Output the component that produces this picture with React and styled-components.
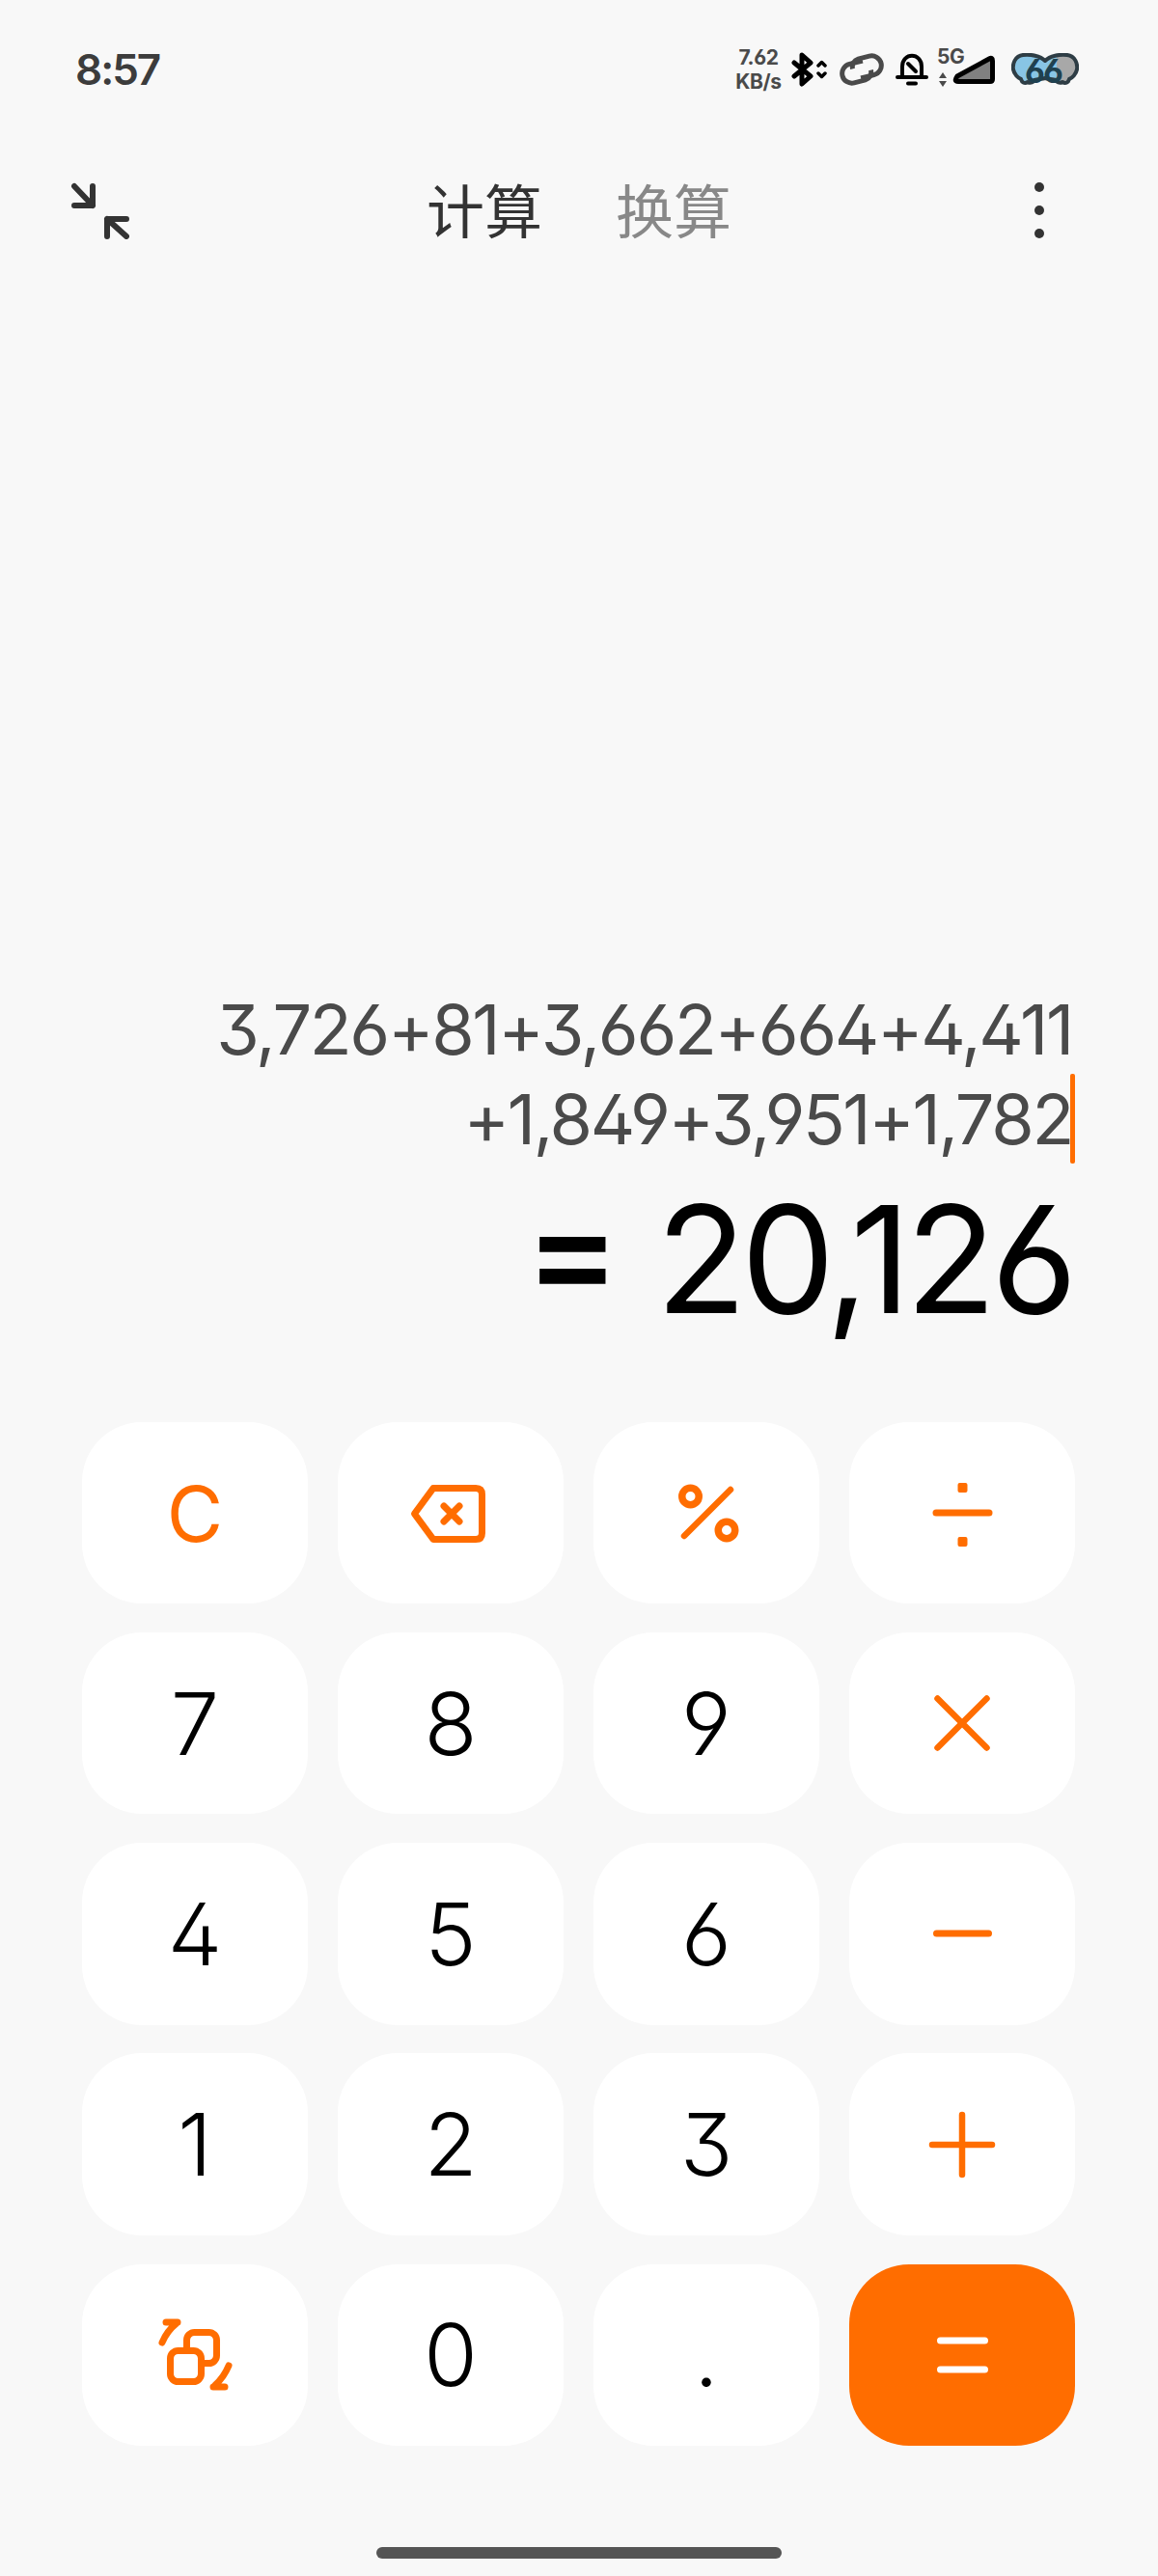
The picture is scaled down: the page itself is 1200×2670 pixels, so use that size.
import React from 'react'
import styled, { createGlobalStyle } from 'styled-components'

const ORANGE = '#ff6d00'

const GlobalStyle = createGlobalStyle`
  html, body { margin: 0; padding: 0; background: #f8f8f8; }
  body { font-family: "Inter", "Noto Sans CJK SC", sans-serif; font-feature-settings: "ss01"; }
`

const Page = styled.div`
  width: 1200px;
  height: 2670px;
  background: #f8f8f8;
  display: flex;
  flex-direction: column;
  overflow: hidden;
`

const StatusBar = styled.div`
  height: 146px;
  flex: none;
  box-sizing: border-box;
  padding: 0 82px 2px 78px;
  display: flex;
  align-items: center;
  justify-content: space-between;
`

const Time = styled.div`
  font-size: 44px;
  font-weight: 600;
  letter-spacing: -2px;
  color: #3c3c3c;
`

const StatusIcons = styled.div`
  display: flex;
  align-items: center;
`

const NetSpeed = styled.div`
  width: 50px;
  margin-right: 9px;
  text-align: center;
  font-size: 21px;
  font-weight: 700;
  line-height: 25px;
  letter-spacing: -0.4px;
  color: #4a4a4a;
`

const StatusIcon = styled.svg`
  display: block;
  flex: none;
  margin-left: ${p => p.$gap || 0}px;
`

const SignalBox = styled.div`
  position: relative;
  width: 60px;
  height: 44px;
  margin-left: 9px;
`

const FiveG = styled.span`
  position: absolute;
  left: 0;
  top: -1px;
  font-size: 21px;
  font-weight: 700;
  line-height: 20px;
  letter-spacing: -0.5px;
  color: #4a4a4a;
`

const BatteryBox = styled.div`
  position: relative;
  width: 70px;
  height: 34px;
  margin-left: 17px;
`

const BatteryText = styled.span`
  position: absolute;
  left: 0;
  right: 4px;
  top: 1px;
  text-align: center;
  font-size: 34px;
  font-weight: 700;
  line-height: 36px;
  letter-spacing: -2px;
  color: #1f4150;
`

const TopBar = styled.div`
  height: 144px;
  flex: none;
  box-sizing: border-box;
  padding: 0 116px 0 74px;
  display: flex;
  align-items: center;
  justify-content: space-between;
`

const Tabs = styled.div`
  display: flex;
  gap: 76px;
  margin: -4px 4px 0 0;
`

const Tab = styled.div`
  font-family: "Noto Sans CJK SC", sans-serif;
  font-size: 60px;
  line-height: 70px;
  font-weight: 400;
  color: ${p => (p.$active ? '#333333' : '#888888')};
`

const Dots = styled.div`
  width: 14px;
  display: flex;
  flex-direction: column;
  align-items: center;
  gap: 14px;
`

const Dot = styled.span`
  width: 10px;
  height: 10px;
  border-radius: 50%;
  background: #333;
`

const Display = styled.div`
  flex: 1;
  box-sizing: border-box;
  padding: 0 89px 76px 0;
  display: flex;
  flex-direction: column;
  justify-content: flex-end;
  align-items: flex-end;
`

const Expression = styled.div`
  font-size: 72px;
  line-height: 93px;
  font-weight: 400;
  letter-spacing: -2.35px;
  color: #4a4a4a;
  white-space: nowrap;
`

const Caret = styled.span`
  display: inline-block;
  width: 5px;
  height: 93px;
  margin-left: -2px;
  margin-right: -3px;
  vertical-align: top;
  border-radius: 2px;
  background: ${ORANGE};
`

const Result = styled.div`
  margin-top: 6px;
  font-size: 154px;
  line-height: 186px;
  font-weight: 400;
  letter-spacing: -5.5px;
  color: #000;
  white-space: nowrap;
`

const Equals = styled.span`
  margin-right: 43px;
  font-size: 145px;
  font-weight: 600;
  vertical-align: 13px;
  line-height: 1;
`

const Keypad = styled.div`
  flex: none;
  display: grid;
  grid-template-columns: repeat(4, 234px);
  grid-auto-rows: 188.5px;
  column-gap: 31px;
  row-gap: 29.7px;
  padding-left: 85px;
`

const Key = styled.div`
  border-radius: 62px;
  background: ${p => (p.$primary ? ORANGE : '#ffffff')};
  color: ${p => (p.$accent ? ORANGE : '#000000')};
  font-size: ${p => (p.$accent ? 80 : 90)}px;
  font-weight: ${p => (p.$accent ? 400 : 350)};
  display: flex;
  align-items: center;
  justify-content: center;
`

const Footer = styled.div`
  height: 135px;
  flex: none;
  display: flex;
  justify-content: center;
  padding-top: 105px;
  box-sizing: border-box;
`

const HomeBar = styled.div`
  width: 420px;
  height: 12px;
  border-radius: 6px;
  background: #555555;
`

const KeyIcon = ({ children, size = 90, fill = 'none', color = ORANGE, sw = 6.5 }) => (
  <svg width={size} height={size} viewBox={`0 0 ${size} ${size}`} fill={fill} stroke={color} strokeWidth={sw} strokeLinecap="round" strokeLinejoin="round">
    {children}
  </svg>
)

const keys = [
  { label: 'C', accent: true },
  { icon: 'back' },
  { icon: 'percent' },
  { icon: 'divide' },
  { label: '7' }, { label: '8' }, { label: '9' },
  { icon: 'times' },
  { label: '4' }, { label: '5' }, { label: '6' },
  { icon: 'minus' },
  { label: '1' }, { label: '2' }, { label: '3' },
  { icon: 'plus' },
  { icon: 'convert' },
  { label: '0' },
  { label: '.' },
  { icon: 'equals', primary: true },
]

const icons = {
  back: (
    <KeyIcon sw={7}>
      <path d="M27 19.5 H71 Q77.5 19.5 77.5 26 V66 Q77.5 72.5 71 72.5 H27 L7.5 46 Z" />
      <path d="M38 38 L54 54 M54 38 L38 54" />
    </KeyIcon>
  ),
  percent: (
    <KeyIcon>
      <circle cx="28.5" cy="28" r="8.75" strokeWidth={7.5} />
      <circle cx="66" cy="63" r="8.75" strokeWidth={7.5} />
      <path d="M70 21 L22 69" />
    </KeyIcon>
  ),
  divide: (
    <KeyIcon>
      <path d="M18 45 H73" strokeWidth={7} />
      <rect x="42.5" y="16" width="6" height="6" strokeWidth={4} fill={ORANGE} />
      <rect x="42.5" y="72" width="6" height="6" strokeWidth={4} fill={ORANGE} />
    </KeyIcon>
  ),
  times: (
    <KeyIcon>
      <path d="M19.5 19.5 L70.5 70.5 M70.5 19.5 L19.5 70.5" />
    </KeyIcon>
  ),
  minus: (
    <KeyIcon>
      <path d="M18.5 45 H72.5" strokeWidth={7} />
    </KeyIcon>
  ),
  plus: (
    <KeyIcon>
      <path d="M14 45 H76 M45 14 V76" strokeWidth={6.5} />
    </KeyIcon>
  ),
  convert: (
    <KeyIcon sw={7}>
      <rect x="36.5" y="21.5" width="31" height="32" rx="8" />
      <rect x="19.5" y="40.5" width="32" height="32" rx="8" fill="#fff" />
      <path d="M11 32 Q16 20 26 12 M15 11 H27" />
      <path d="M80 56 Q75 68 66 76 M64 78 H76" />
    </KeyIcon>
  ),
  equals: (
    <KeyIcon color="#ffffff" sw={7}>
      <path d="M22.5 30 H68.5 M22.5 60 H68.5" />
    </KeyIcon>
  ),
}

const Bluetooth = () => (
  <StatusIcon width="37" height="36" viewBox="0 0 37 36">
    <path d="M3 11 L20 25 L11 33 V3 L20 11 L3 25" fill="none" stroke="#000" strokeWidth="5" strokeLinejoin="round" strokeLinecap="round" />
    <path d="M28 14 L31.5 10.5 L35 14 M28 22 L31.5 25.5 L35 22" fill="none" stroke="#000" strokeWidth="3.5" strokeLinecap="round" strokeLinejoin="round" />
  </StatusIcon>
)

const LinkIcon = () => (
  <StatusIcon width="46" height="34" viewBox="0 0 46 34" $gap={13}>
    <g transform="rotate(-14 23 17)" fill="none" stroke="#4a4a4a" strokeWidth="5">
      <path d="M26 8.5 H12 A10 10 0 0 0 12 28.5 H24 A8.5 8.5 0 0 0 32 20" />
      <path d="M20 25.5 H34 A10 10 0 0 0 34 5.5 H22 A8.5 8.5 0 0 0 14 14" />
    </g>
  </StatusIcon>
)

const Bell = () => (
  <StatusIcon width="34" height="34" viewBox="0 0 34 34" $gap={12}>
    <path d="M2 25 H32 M7 25 V14 C7 -1 27 -1 27 14 V25" fill="none" stroke="#000" strokeWidth="4" strokeLinecap="round" />
    <path d="M13 11 L21 19 M13 31.5 H21" fill="none" stroke="#000" strokeWidth="4" strokeLinecap="round" />
  </StatusIcon>
)

const Signal = () => (
  <StatusIcon width="60" height="44" viewBox="0 0 60 44">
    <path d="M22 34.5 H55 Q57.5 34.5 57.5 32 V13 Q57.5 9 54 11 L21 29 Q17 34.5 22 34.5 Z" fill="#808080" stroke="#000" strokeWidth="5" strokeLinejoin="round" />
    <path d="M6 25 L10 31 H2 Z M6 40 L10 34 H2 Z" fill="#4a4a4a" />
  </StatusIcon>
)

const Elephant = () => (
  <StatusIcon width="70" height="34" viewBox="0 0 70 34">
    <defs>
      <linearGradient id="level" x1="0" x2="1" y1="0" y2="0">
        <stop offset="0.68" stopColor="#88c5e5" />
        <stop offset="0.68" stopColor="#a8a8a8" />
      </linearGradient>
    </defs>
    <path d="M35 8 C30 3 20 1 12 2 C4 3 1 11 2 17 C3 22 7 26 10 27 C11 31 14 32 17 30 C20 32 23 30 24 28 C28 27 32 27 35 26 C38 27 42 27 46 28 C47 30 50 32 53 30 C56 32 59 31 60 27 C63 26 67 22 68 17 C69 11 66 3 58 2 C50 1 40 3 35 8 Z" fill="url(#level)" stroke="#2e3d45" strokeWidth="4" strokeLinejoin="round" />
  </StatusIcon>
)

export default function App() {
  return (
    <Page>
      <GlobalStyle />
      <StatusBar>
        <Time>8:57</Time>
        <StatusIcons>
          <NetSpeed>7.62<br />KB/s</NetSpeed>
          <Bluetooth />
          <LinkIcon />
          <Bell />
          <SignalBox>
            <FiveG>5G</FiveG>
            <Signal />
          </SignalBox>
          <BatteryBox>
            <Elephant />
            <BatteryText>66</BatteryText>
          </BatteryBox>
        </StatusIcons>
      </StatusBar>

      <TopBar>
        <svg width="60" height="60" viewBox="0 0 60 60" fill="none" stroke="#333" strokeWidth="6" strokeLinecap="round" strokeLinejoin="round">
          <path d="M3 5 L22 25 M22 5 V25 H3" />
          <path d="M57 57 L37 39 M37 57 V39 H57" />
        </svg>
        <Tabs>
          <Tab $active>计算</Tab>
          <Tab>换算</Tab>
        </Tabs>
        <Dots><Dot /><Dot /><Dot /></Dots>
      </TopBar>

      <Display>
        <Expression>3,726+81+3,662+664+4,411</Expression>
        <Expression>+1,849+3,951+1,782<Caret /></Expression>
        <Result><Equals>=</Equals>20,126</Result>
      </Display>

      <Keypad>
        {keys.map((k, i) => (
          <Key key={i} $accent={k.accent} $primary={k.primary}>
            {k.icon ? icons[k.icon] : k.label}
          </Key>
        ))}
      </Keypad>

      <Footer><HomeBar /></Footer>
    </Page>
  )
}
